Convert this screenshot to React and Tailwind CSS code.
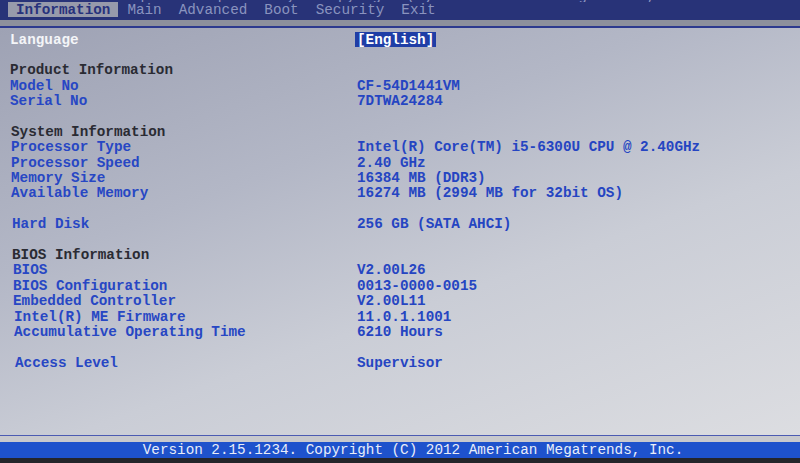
const mono = { fontFamily: '"Liberation Mono", "DejaVu Sans Mono", monospace' };

const tabs = ["Information", "Main", "Advanced", "Boot", "Security", "Exit"];

// kind: head = dark section title, item = blue label/value, blank = empty line
const rows = [
  { kind: "blank" },
  { kind: "head", label: "Product Information", pad: 10 },
  { kind: "item", label: "Model No", value: "CF-54D1441VM", pad: 10 },
  { kind: "item", label: "Serial No", value: "7DTWA24284", pad: 10 },
  { kind: "blank" },
  { kind: "head", label: "System Information", pad: 11 },
  { kind: "item", label: "Processor Type", value: "Intel(R) Core(TM) i5-6300U CPU @ 2.40GHz", pad: 11 },
  { kind: "item", label: "Processor Speed", value: "2.40 GHz", pad: 11 },
  { kind: "item", label: "Memory Size", value: "16384 MB (DDR3)", pad: 11 },
  { kind: "item", label: "Available Memory", value: "16274 MB (2994 MB for 32bit OS)", pad: 11 },
  { kind: "blank" },
  { kind: "item", label: "Hard Disk", value: "256 GB (SATA AHCI)", pad: 12 },
  { kind: "blank" },
  { kind: "head", label: "BIOS Information", pad: 12 },
  { kind: "item", label: "BIOS", value: "V2.00L26", pad: 13 },
  { kind: "item", label: "BIOS Configuration", value: "0013-0000-0015", pad: 13 },
  { kind: "item", label: "Embedded Controller", value: "V2.00L11", pad: 13 },
  { kind: "item", label: "Intel(R) ME Firmware", value: "11.0.1.1001", pad: 14 },
  { kind: "item", label: "Accumulative Operating Time", value: "6210 Hours", pad: 14 },
  { kind: "blank" },
  { kind: "item", label: "Access Level", value: "Supervisor", pad: 15 },
];

function Row({ row }) {
  if (row.kind === "blank") return <div className="h-[15.4px]" />;
  return (
    <div className="flex h-[15.4px] items-center whitespace-pre">
      <div
        className={`shrink-0 ${row.kind === "head" ? "text-[#2a2b33]" : "text-[#2747c4]"}`}
        style={{ width: 357 - row.pad, marginLeft: row.pad }}
      >
        {row.label}
      </div>
      {row.value && <div className="text-[#2545c2]">{row.value}</div>}
    </div>
  );
}

export default function App() {
  return (
    <div
      className="flex h-[463px] w-[800px] flex-col overflow-hidden text-[14.3px] font-bold leading-none"
      style={mono}
    >
      {/* header */}
      <div className="h-[20px] shrink-0 overflow-hidden bg-[#283378]">
        <div className="h-[2px] overflow-hidden whitespace-pre pl-[132px] font-normal text-[#8e97c2]">
          <div className="h-[14px] -translate-y-[11px]">
            Aptio Setup Utility - Copyright (C) 2012 American Megatrends, Inc.
          </div>
        </div>
        <div className="flex h-[15px] gap-[1px] pl-[8px]">
          {tabs.map((t, i) => (
            <div
              key={t}
              className={`flex items-center px-[8px] pt-[2px] ${
                i === 0
                  ? "bg-[#979aab] font-bold text-[#27327c]"
                  : "font-normal text-[#8a93bf]"
              }`}
            >
              {t}
            </div>
          ))}
        </div>
      </div>
      <div className="h-[6px] shrink-0 bg-[#8d909c]" />
      <div className="h-[2px] shrink-0 bg-[#2d3a8e]" />

      {/* body */}
      <div className="flex min-h-0 flex-1 flex-col bg-[linear-gradient(160deg,#9ea2b4_0%,#b3b7c6_35%,#cacdd6_62%,#dcdde1_100%)] pt-[4px]">
        <div className="flex h-[15.4px] items-center pl-[10px]">
          <div className="w-[345px] shrink-0 text-[#f4f5f8]">Language</div>
          <div className="flex h-[15px] items-center bg-[#1f3ea6] px-[2px] text-white">[English]</div>
        </div>
        {rows.map((r, i) => (
          <Row key={i} row={r} />
        ))}
      </div>

      {/* footer */}
      <div className="h-[1px] shrink-0 bg-[#4c5bb2]" />
      <div className="h-[6px] shrink-0 bg-[#c8c9cd]" />
      <div className="flex h-[16px] shrink-0 items-center justify-center whitespace-pre bg-[#1e52cc] pl-[26px] font-normal text-[#e9edf9]">
        Version 2.15.1234. Copyright (C) 2012 American Megatrends, Inc.
      </div>
      <div className="h-[5px] shrink-0 bg-[#24252a]" />
    </div>
  );
}
